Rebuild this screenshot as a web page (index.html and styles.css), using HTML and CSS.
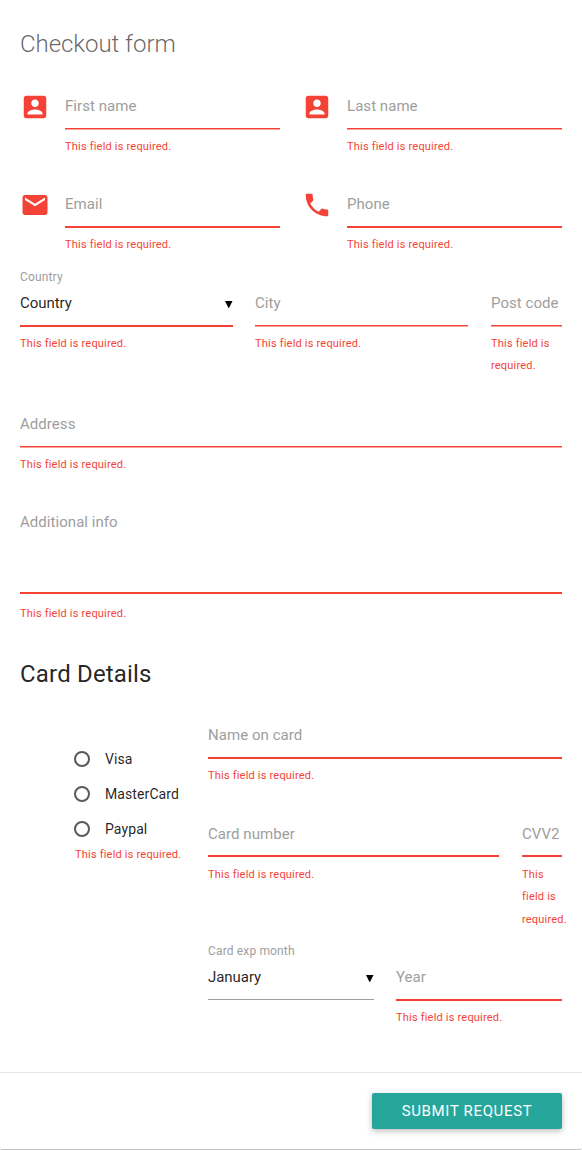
FILE: index.html
```html
<!DOCTYPE html>
<html lang="en">
<head>
<meta charset="utf-8">
<title>Checkout form</title>
<link rel="stylesheet" href="styles.css">
</head>
<body>
<form class="card">
  <div class="content">
    <h1 class="title">Checkout form</h1>
    <div class="row halves row-name">
      <div class="with-icon">
        <svg class="icon" viewBox="0 0 24 24"><path d="M3 5v14c0 1.100.89 2 2 2h14c1.100 0 2-.9 2-2V5c0-1.100-.9-2-2-2H5c-1.110 0-2 .9-2 2zm12 4c0 1.660-1.340 3-3 3s-3-1.340-3-3 1.340-3 3-3 3 1.340 3 3zm-9 8c0-2 4-3.100 6-3.100s6 1.100 6 3.100v1H6v-1z"/></svg>
        <div class="field soft"><div class="control">First name</div><div class="error">This field is required.</div></div>
      </div>
      <div class="with-icon">
        <svg class="icon" viewBox="0 0 24 24"><path d="M3 5v14c0 1.100.89 2 2 2h14c1.100 0 2-.9 2-2V5c0-1.100-.9-2-2-2H5c-1.110 0-2 .9-2 2zm12 4c0 1.660-1.340 3-3 3s-3-1.340-3-3 1.340-3 3-3 3 1.340 3 3zm-9 8c0-2 4-3.100 6-3.100s6 1.100 6 3.100v1H6v-1z"/></svg>
        <div class="field soft"><div class="control">Last name</div><div class="error">This field is required.</div></div>
      </div>
    </div>
    <div class="row halves row-contact">
      <div class="with-icon">
        <svg class="icon" viewBox="0 0 24 24"><path d="M20 4H4c-1.100 0-1.990.9-1.990 2L2 18c0 1.100.9 2 2 2h16c1.100 0 2-.9 2-2V6c0-1.100-.9-2-2-2zm0 4l-8 5-8-5V6l8 5 8-5v2z"/></svg>
        <div class="field"><div class="control">Email</div><div class="error">This field is required.</div></div>
      </div>
      <div class="with-icon">
        <svg class="icon" viewBox="0 0 24 24"><path d="M6.620 10.790c1.440 2.830 3.760 5.140 6.590 6.590l2.200-2.200c.27-.27.67-.36 1.020-.24 1.120.37 2.330.57 3.570.57.55 0 1 .45 1 1V20c0 .55-.45 1-1 1-9.390 0-17-7.610-17-17 0-.55.45-1 1-1h3.500c.55 0 1 .45 1 1 0 1.250.2 2.450.57 3.570.11.35.03.74-.25 1.020l-2.200 2.200z"/></svg>
        <div class="field"><div class="control">Phone</div><div class="error">This field is required.</div></div>
      </div>
    </div>
    <div class="row places">
      <div class="field">
        <div class="caption">Country</div>
        <div class="control select"><span>Country</span><svg class="caret" viewBox="0 0 8 8"><path d="M0 0h8L4 8z"/></svg></div>
        <div class="error">This field is required.</div>
      </div>
      <div class="field soft uncaptioned"><div class="control">City</div><div class="error">This field is required.</div></div>
      <div class="field soft uncaptioned"><div class="control">Post code</div><div class="error">This field is required.</div></div>
    </div>
    <div class="row row-address">
      <div class="field soft"><div class="control">Address</div><div class="error">This field is required.</div></div>
    </div>
    <div class="row row-info">
      <div class="field"><div class="control area">Additional info</div><div class="error">This field is required.</div></div>
    </div>
    <h2 class="subtitle">Card Details</h2>
    <div class="payment">
      <div class="methods">
        <div class="method"><span class="radio"></span><span class="method-name">Visa</span></div>
        <div class="method"><span class="radio"></span><span class="method-name">MasterCard</span></div>
        <div class="method"><span class="radio"></span><span class="method-name">Paypal</span></div>
        <div class="error">This field is required.</div>
      </div>
      <div class="card-fields">
        <div class="row row-holder">
          <div class="field"><div class="control">Name on card</div><div class="error">This field is required.</div></div>
        </div>
        <div class="row number">
          <div class="field"><div class="control">Card number</div><div class="error">This field is required.</div></div>
          <div class="field"><div class="control">CVV2</div><div class="error">This field is required.</div></div>
        </div>
        <div class="row expiry">
          <div class="field valid">
            <div class="caption">Card exp month</div>
            <div class="control select"><span>January</span><svg class="caret" viewBox="0 0 8 8"><path d="M0 0h8L4 8z"/></svg></div>
          </div>
          <div class="field uncaptioned"><div class="control">Year</div><div class="error">This field is required.</div></div>
        </div>
      </div>
    </div>
  </div>
  <div class="actions"><button class="submit" type="button">SUBMIT REQUEST</button></div>
</form>
</body>
</html>
```
FILE: styles.css
```css
* { box-sizing: border-box; }
body {
  margin: 0;
  background: #fff;
  font-family: Roboto, "Liberation Sans", sans-serif;
  font-size: 15px;
  line-height: 22.5px;
  color: rgba(0, 0, 0, .87);
}
.card {
  height: 1150px;
  display: flex;
  flex-direction: column;
  border-bottom: 1px solid #c4c4c4;
  border-radius: 2px;
}
.content { padding: 20px; height: 1072px; }
.title, .subtitle { margin: 0; font-size: 24px; line-height: 48px; }
.title { height: 64px; font-weight: 300; color: rgba(0, 0, 0, .62); letter-spacing: -.05px; }
.subtitle { height: 63px; font-weight: 400; letter-spacing: .18px; }
.row { display: grid; align-items: start; }
.row-name { height: 98px; }
.row-contact { height: 86px; }
.halves { grid-template-columns: 1fr 1fr; column-gap: 22px; }
.with-icon { display: grid; grid-template-columns: 30px 1fr; column-gap: 15px; }
.icon { width: 30px; height: 30px; margin-top: 7.5px; fill: #f44336; }
.places { height: 134px; grid-template-columns: 213px 213px 71px; column-gap: 22px; }
.places .field:last-child { margin-left: 1px; margin-right: -1px; }
.places .field:last-child { margin-right: 0; }
.row-address { height: 98px; }
.row-info { height: 150px; }
.field { min-width: 0; }
.control {
  height: 46px;
  padding-top: 11px;
  border-bottom: 2px solid #f44336;
  color: #9e9e9e;
  white-space: nowrap;
  letter-spacing: .05px;
}
.places .field:last-child .control { width: 71px; }
.soft .control {
  height: 45px;
  margin-bottom: 1px;
  border-bottom-width: 1px;
  box-shadow: 0 1px 0 rgba(244, 67, 54, .5);
}
.valid .control { height: 45px; border-bottom: 1px solid #9e9e9e; }
.control.area { height: 94px; }
.area + .error { padding-top: 9px; }
.select { display: flex; justify-content: space-between; color: rgba(0, 0, 0, .87); letter-spacing: -.05px; }
.caret { width: 7.5px; height: 7.5px; margin: 8.5px .5px 0 0; fill: #000; }
.caption { height: 13px; line-height: 18px; font-size: 12px; color: #9e9e9e; letter-spacing: .15px; }
.uncaptioned { padding-top: 13px; }
.error { padding-top: 5.6px; font-size: 11px; color: #f44336; letter-spacing: .2px; }
.payment { display: grid; grid-template-columns: 133px 354px; column-gap: 1px; padding-left: 54px; }
.methods { padding-top: 28px; }
.method { display: flex; align-items: center; height: 35px; font-size: 14px; letter-spacing: .1px; }
.method-name { padding-top: 1px; }
.radio { width: 16px; height: 16px; margin-right: 15px; border: 2px solid #5a5a5a; border-radius: 50%; }
.methods .error { padding: 0 0 0 1px; margin-top: -2px; }
.row-holder { height: 98px; }
.number { height: 131px; grid-template-columns: 291px 40px; column-gap: 23px; }
.number .control { padding-top: 12px; }
.number .error { padding-top: 6.6px; }
.expiry { grid-template-columns: 166px 166px; column-gap: 22px; }
.actions { flex: 1; border-top: 1px solid #e6e6e6; padding: 20px; display: flex; justify-content: flex-end; align-items: flex-start; }
.submit {
  width: 190px;
  height: 36px;
  padding: 0;
  border: 0;
  border-radius: 2px;
  background: #26a69a;
  color: #fff;
  font: 400 15px/36px Roboto, "Liberation Sans", sans-serif;
  letter-spacing: .65px;
  box-shadow: 0 2px 5px rgba(0, 0, 0, .16), 0 2px 8px rgba(0, 0, 0, .12);
}
```
